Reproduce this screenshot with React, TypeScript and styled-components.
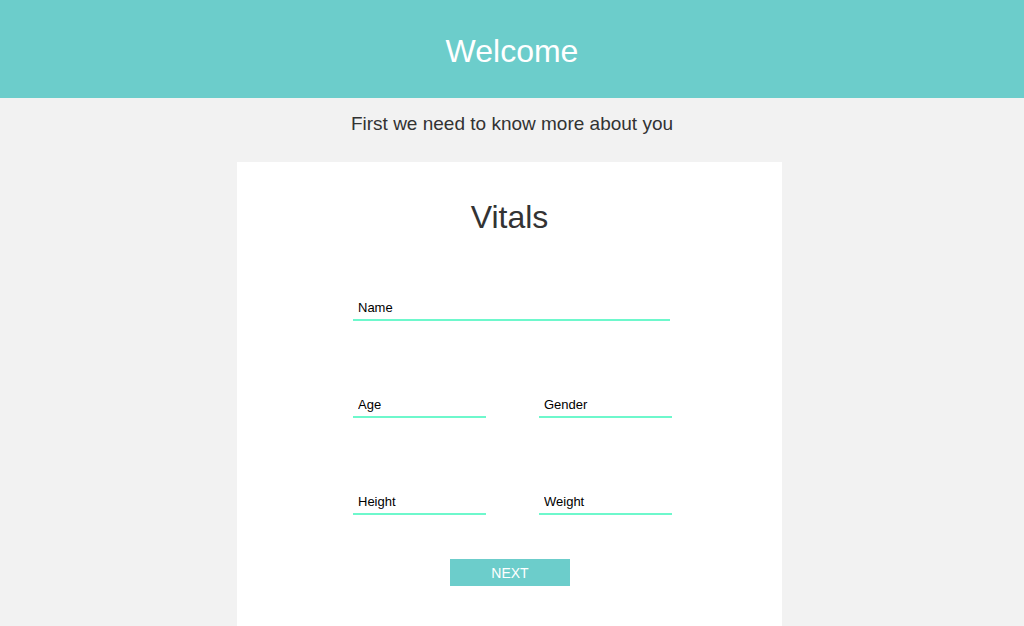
import React from 'react'
import styled, { createGlobalStyle } from 'styled-components'

const GlobalStyle = createGlobalStyle`
    html, body {
        margin: 0;
        padding: 0;
        background: #f2f2f2;
        font-family: "Liberation Sans", Arial, sans-serif;
    }
    * {
        box-sizing: border-box;
    }
`

const App = () => {
    return (
        <Page>
            <GlobalStyle />
            <Header>
                <Title>Welcome</Title>
            </Header>
            <Subtitle>First we need to know more about you</Subtitle>
            <Card>
                <CardTitle>Vitals</CardTitle>
                <Form onSubmit={(e) => e.preventDefault()}>
                    <Field type="text" placeholder="Name" $width={317} />
                    <Row>
                        <Field type="text" placeholder="Age" $width={133} />
                        <Field type="text" placeholder="Gender" $width={133} />
                    </Row>
                    <Row>
                        <Field type="text" placeholder="Height" $width={133} />
                        <Field type="text" placeholder="Weight" $width={133} />
                    </Row>
                    <Next type="submit">NEXT</Next>
                </Form>
            </Card>
        </Page>
    )
}

const Page = styled.div`
    min-height: 626px;
    display: flex;
    flex-direction: column;
`
const Header = styled.header`
    height: 98px;
    background: #6ccdcb;
    display: flex;
    align-items: center;
    justify-content: center;
`
const Title = styled.h1`
    margin: 0;
    font-size: 32px;
    font-weight: normal;
    color: #fff;
    line-height: 37px;
    padding-top: 5px;
`
const Subtitle = styled.p`
    margin: 15px 0 27px;
    text-align: center;
    font-size: 19px;
    line-height: 22px;
    color: #333;
`
const Card = styled.section`
    width: 545px;
    margin-left: calc(50% - 275px);
    flex: 1;
    background: #fff;
    padding-top: 37px;
`
const CardTitle = styled.h2`
    margin: 0;
    text-align: center;
    font-size: 32px;
    font-weight: normal;
    line-height: 37px;
    color: #333;
`
const Form = styled.form`
    margin-top: 61px;
    padding-left: 116px;
    display: flex;
    flex-direction: column;
    gap: 73px;
`
const Row = styled.div`
    display: flex;
    gap: 53px;
    width: 319px;
`
const Field = styled.input<{ $width: number }>`
    width: ${(p) => p.$width}px;
    height: 24px;
    padding: 0 0 2px 5px;
    border: none;
    border-bottom: 2px solid #6ef8cc;
    outline: none;
    font-family: "Liberation Sans", Arial, sans-serif;
    font-size: 13px;
    color: #000;
    background: transparent;
    &::placeholder {
        color: #000;
    }
`
const Next = styled.button`
    align-self: flex-start;
    margin-left: 97px;
    margin-top: -29px;
    width: 120px;
    height: 27px;
    border: none;
    background: #6ccdcb;
    color: #fff;
    font-family: "Liberation Sans", Arial, sans-serif;
    font-size: 14px;
    cursor: pointer;
`

export default App
